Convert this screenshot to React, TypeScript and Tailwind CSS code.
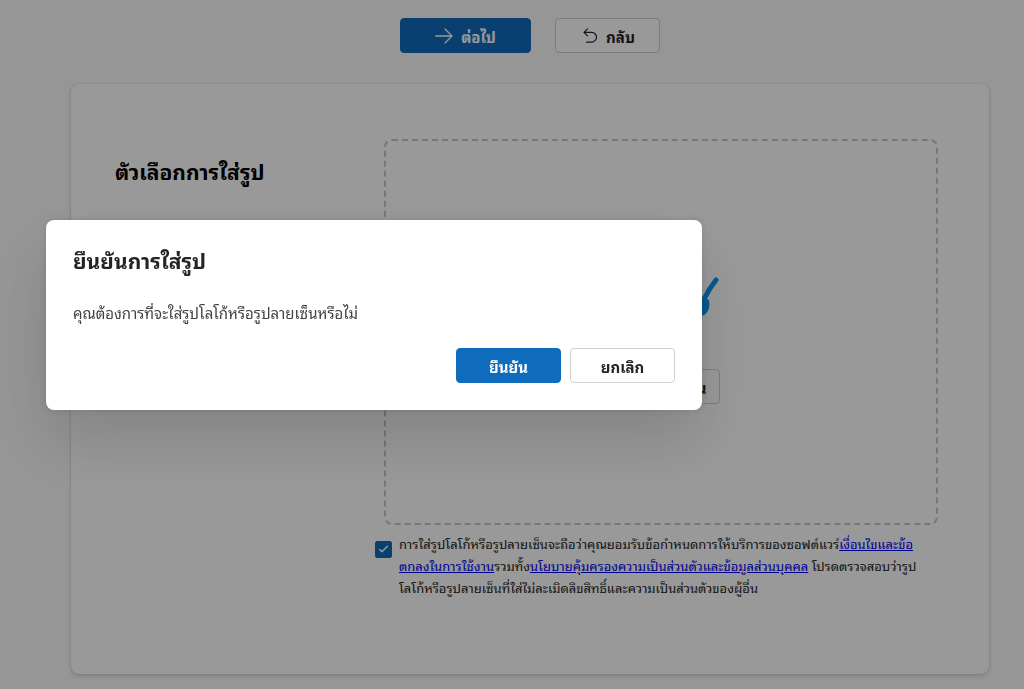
import { useState } from "react"
import type { ReactNode } from "react"

type ButtonProps = {
  children: ReactNode
  primary?: boolean
  className?: string
  onClick?: () => void
}

function Button({ children, primary, className = "", onClick }: ButtonProps) {
  const look = primary
    ? "border-[#0f6cbd] bg-[#0f6cbd] text-white"
    : "border-[#d1d1d1] bg-white text-[#242424]"
  return (
    <button
      type="button"
      onClick={onClick}
      className={`flex h-[35px] items-center justify-center gap-2 rounded border text-[15px] leading-5 font-bold ${look} ${className}`}
    >
      {children}
    </button>
  )
}

function ArrowRightIcon() {
  return (
    <svg width="18" height="18" viewBox="0 0 18 18" fill="none" stroke="currentColor" strokeWidth="1.3" strokeLinecap="round" strokeLinejoin="round" aria-hidden="true">
      <path d="M.8 9h16.2M10 2l7 7-7 7" />
    </svg>
  )
}

function BackIcon() {
  return (
    <svg width="18" height="18" viewBox="0 0 18 18" fill="none" stroke="currentColor" strokeWidth="1.2" strokeLinecap="round" strokeLinejoin="round" aria-hidden="true">
      <path d="M7.500 1.800 4 5.300l3.500 3.500M4 5.300h7.600a4.900 4.900 0 0 1 0 9.800H6.500" />
    </svg>
  )
}

function BrushIcon() {
  return (
    <svg width="116" height="72" viewBox="0 0 116 72" fill="none" aria-hidden="true">
      <path d="M8 60c22-32 38-40 34-16s20 8 38-4" stroke="#0c95ee" strokeWidth="4" strokeLinecap="round" />
      <path d="M113 9C109 14 105 20 101 28" stroke="#0c95ee" strokeWidth="5" strokeLinecap="round" />
      <path d="M98 25l8 4c1 6 0 12-5 15l-12 5z" fill="#0c95ee" />
    </svg>
  )
}

function ConfirmDialog({ onClose }: { onClose: () => void }) {
  return (
    <div className="fixed inset-0 bg-black/40 pt-[220px] pl-[46px]">
      <div
        role="dialog"
        aria-modal="true"
        aria-labelledby="confirm-title"
        className="max-w-[656px] rounded-lg bg-white px-[27px] pt-6 pb-[27px] shadow-[0_32px_64px_rgba(0,0,0,0.14),0_0_8px_rgba(0,0,0,0.12)]"
      >
        <h2 id="confirm-title" className="text-[21px] leading-8 font-bold text-[#242424]">
          ยืนยันการใส่รูป
        </h2>
        <p className="mt-6 text-[15px] leading-6 text-[#424242]">
          คุณต้องการที่จะใส่รูปโลโก้หรือรูปลายเซ็นหรือไม่
        </p>
        <div className="mt-6 flex justify-end gap-[9px]">
          <Button primary className="w-[105px]" onClick={onClose}>ยืนยัน</Button>
          <Button className="w-[105px]" onClick={onClose}>ยกเลิก</Button>
        </div>
      </div>
    </div>
  )
}

export default function App() {
  const [open, setOpen] = useState(true)
  const [accepted, setAccepted] = useState(true)

  return (
    <div className="min-h-screen bg-[#fafafa] pr-[35px] pb-[15px] pl-[71px] font-['Noto_Sans_Thai_Looped','Noto_Sans_Thai','Noto_Sans',sans-serif] text-[#242424]">
      <div className="flex justify-center gap-6 pt-[18px]">
        <Button primary className="w-[131px]" onClick={() => setOpen(true)}>
          <ArrowRightIcon />
          ต่อไป
        </Button>
        <Button className="w-[105px]">
          <BackIcon />
          กลับ
        </Button>
      </div>

      <main className="mt-[31px] flex min-h-[590px] rounded-lg bg-white pt-[55px] pr-[51px] pl-11 shadow-[0_2px_4px_rgba(0,0,0,0.14),0_0_2px_rgba(0,0,0,0.12)]">
        <h1 className="w-[260px] shrink-0 pt-4 text-[21px] leading-8 font-bold text-black">
          ตัวเลือกการใส่รูป
        </h1>

        <section className="flex-1">
          <div className="ml-[9px] flex h-[386px] flex-col items-center rounded-lg border-2 border-dashed border-[#c7c7c7] pt-[130px]">
            <BrushIcon />
            <Button className="mt-[26px] w-[117px]">วาดรูปลายเซ็น</Button>
          </div>

          <div className="mt-2 flex gap-[7px] pr-[10px]">
            <span className="relative mt-2 size-[17px] shrink-0">
              <input
                id="accept"
                type="checkbox"
                checked={accepted}
                onChange={(e) => setAccepted(e.target.checked)}
                className="block size-[17px] appearance-none rounded-xs border border-[#616161] checked:border-[#0f6cbd] checked:bg-[#0f6cbd]"
              />
              {accepted && (
                <svg className="pointer-events-none absolute inset-0" width="17" height="17" viewBox="0 0 17 17" fill="none" stroke="white" strokeWidth="1.5" strokeLinecap="round" strokeLinejoin="round" aria-hidden="true">
                  <path d="M4.700 8.500 7 10.800l5.200-5.400" />
                </svg>
              )}
            </span>
            <label htmlFor="accept" className="text-[13px] leading-[22px]">
              การใส่รูปโลโก้หรือรูปลายเซ็นจะถือว่าคุณยอมรับข้อกำหนดการให้บริการของซอฟต์แวร์
              <a href="#terms" className="text-[#0000ee] underline">เงื่อนไขและข้อ<wbr />ตกลงในการใช้งาน</a>
              รวมทั้ง
              <a href="#privacy" className="text-[#0000ee] underline">นโยบายคุ้มครองความเป็นส่วนตัวและข้อมูลส่วนบุคคล</a>{" "}
              โปรดตรวจสอบว่ารูปโลโก้หรือรูปลายเซ็นที่ใส่ไม่ละเมิดลิขสิทธิ์และความเป็นส่วนตัวของผู้อื่น
            </label>
          </div>
        </section>
      </main>

      {open && <ConfirmDialog onClose={() => setOpen(false)} />}
    </div>
  )
}
